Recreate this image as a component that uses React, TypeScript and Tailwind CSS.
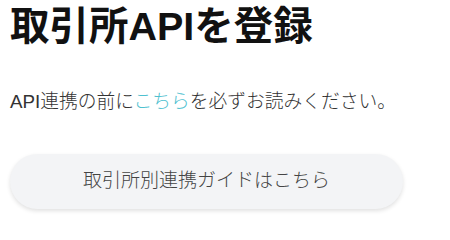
export default function App() {
  return (
    <div
      className="w-[450px] h-[228px] bg-white px-[10px] overflow-hidden"
      style={{ fontFamily: '"Liberation Sans", "Noto Sans CJK JP", sans-serif' }}
    >
      <h1 className="pt-[4px] text-[39.5px] leading-[44px] font-bold text-[#111111]">
        取引所APIを登録
      </h1>
      <p className="mt-[41px] text-[18.75px] leading-[26px] font-light text-[#333333]">
        API連携の前に<a className="text-[#4fc1d0]">こちら</a>を必ずお読みください。
      </p>
      <button className="mt-[39px] w-[393px] h-[55px] rounded-full bg-[#f3f4f6] text-[19px] font-light text-[#444444] shadow-[0_2px_4px_rgba(0,0,0,0.12)]">
        取引所別連携ガイドはこちら
      </button>
    </div>
  );
}
